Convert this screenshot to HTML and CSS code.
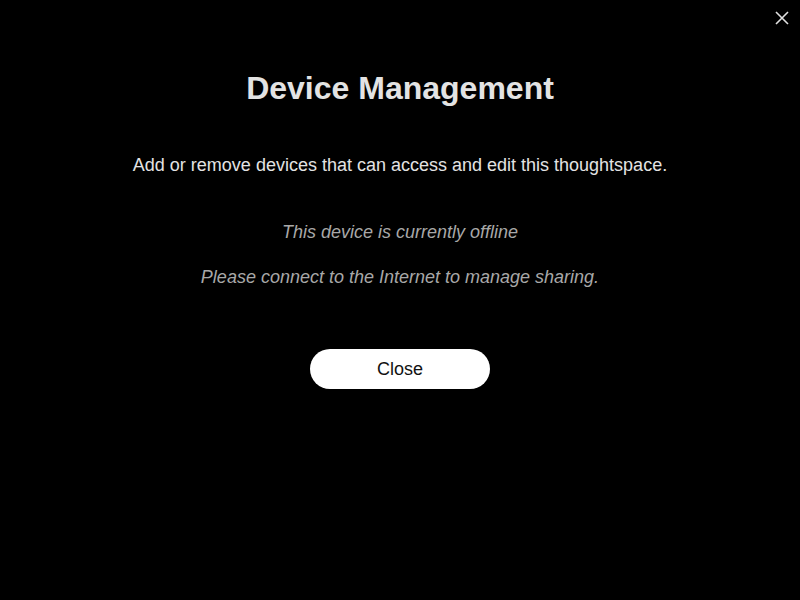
FILE: index.html
```html
<!DOCTYPE html>
<html>
<head>
<meta charset="utf-8">
<link rel="stylesheet" href="styles.css">
</head>
<body>
<div class="modal">
  <button class="close-x" aria-label="Close">
    <svg width="14" height="14" viewBox="0 0 14 14"><path d="M1 1L13 13M13 1L1 13" stroke="#e0e0e0" stroke-width="1.6" fill="none"/></svg>
  </button>
  <h1 class="title">Device Management</h1>
  <p class="subtitle">Add or remove devices that can access and edit this thoughtspace.</p>
  <p class="note first">This device is currently offline</p>
  <p class="note">Please connect to the Internet to manage sharing.</p>
  <div class="actions"><button class="btn">Close</button></div>
</div>
</body>
</html>
```
FILE: styles.css
```css
html, body { margin: 0; padding: 0; background: #000; height: 100%; }
body { font-family: "Liberation Sans", Arial, sans-serif; }
.modal { position: relative; display: flex; flex-direction: column; align-items: center; padding-top: 70px; }
.close-x { position: absolute; top: 11px; right: 11px; width: 14px; height: 14px; padding: 0; border: 0; background: none; display: flex; }
.title { margin: 0; font-size: 32px; font-weight: bold; color: #e3e3e3; line-height: 36px; }
.subtitle { margin: 47px 0 0; font-size: 18px; color: #e3e3e3; line-height: 24px; }
.note { margin: 0; font-size: 18px; font-style: italic; color: #a8a8a8; line-height: 24px; margin-top: 21px; }
.note.first { margin-top: 43px; }
.actions { margin-top: 60px; }
.btn { width: 180px; height: 40px; border-radius: 20px; border: 0; background: #fff; color: #111; font-family: "Liberation Sans", Arial, sans-serif; font-size: 18px; padding: 0; }
```
